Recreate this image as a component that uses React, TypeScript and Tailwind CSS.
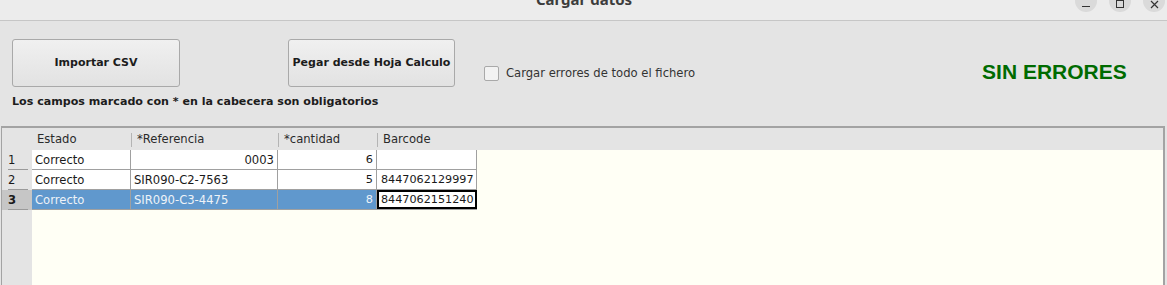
import React from "react";

const cols = [
  { name: "Estado", w: "w-[99px]" },
  { name: "*Referencia", w: "w-[147px]" },
  { name: "*cantidad", w: "w-[99px]" },
  { name: "Barcode", w: "w-[99px]" },
];

const rows = [
  { estado: "Correcto", ref: "0003", refRight: true, cant: "6", barcode: "" },
  { estado: "Correcto", ref: "SIR090-C2-7563", refRight: false, cant: "5", barcode: "8447062129997" },
  { estado: "Correcto", ref: "SIR090-C3-4475", refRight: false, cant: "8", barcode: "8447062151240", selected: true },
];

function WindowButton({ children }: { children: React.ReactNode }) {
  return (
    <div className="flex h-[22px] w-[22px] items-end justify-center rounded-full bg-[#dadada] pb-[4px] text-[11px] leading-none text-[#333]">
      {children}
    </div>
  );
}

export default function App() {
  return (
    <div className="flex h-[285px] w-[1167px] flex-col overflow-hidden bg-[#e4e4e4] font-['DejaVu_Sans',sans-serif] text-[#1a1a1a]">
      {/* title bar */}
      <div className="relative h-[21px] shrink-0 border-b border-[#c6c6c6] bg-[#ececec]">
        <div className="-mt-[11px] flex justify-center pl-[1px] font-['Noto_Sans',sans-serif] text-[15px] font-bold leading-[20px] text-[#3c3c3c]">
          Cargar datos
        </div>
        <div className="absolute right-[2px] top-[-10px] flex gap-[12px]">
          <WindowButton>
            <span className="mb-[1px] block h-[1px] w-[8px] bg-[#333]" />
          </WindowButton>
          <WindowButton>
            <span className="block h-[8px] w-[8px] border border-[#333]" />
          </WindowButton>
          <WindowButton>
            <svg width="9" height="9" viewBox="0 0 9 9" className="mb-[-1px]">
              <path d="M1 1L8 8M8 1L1 8" stroke="#333" strokeWidth="1.2" fill="none" />
            </svg>
          </WindowButton>
        </div>
      </div>

      {/* toolbar */}
      <div className="flex items-start pl-[12px] pt-[18px]">
        <button className="h-[48px] w-[168px] rounded-[3px] border border-[#a9a9a9] bg-gradient-to-b from-[#f0f0f0] to-[#e2e2e2] text-[11px] font-bold text-[#1c1c1c]">
          Importar CSV
        </button>
        <button className="ml-[108px] h-[48px] w-[167px] rounded-[3px] border border-[#a9a9a9] bg-gradient-to-b from-[#f0f0f0] to-[#e2e2e2] text-[11px] font-bold text-[#1c1c1c]">
          Pegar desde Hoja Calculo
        </button>
        <label className="ml-[29px] mt-[26px] flex items-center gap-[7px] text-[11.6px] text-[#333]">
          <span className="h-[15px] w-[15px] rounded-[2px] border border-[#a9a9a9] bg-[#f2f2f2]" />
          Cargar errores de todo el fichero
        </label>
        <div className="ml-[287px] mt-[20px] font-['Liberation_Sans',Arial,sans-serif] text-[21px] font-bold leading-[25px] text-[#006b00]">
          SIN ERRORES
        </div>
      </div>
      <div className="pl-[12px] pt-[8px] text-[11.1px] font-bold leading-[13px] text-[#1c1c1c]">
        Los campos marcado con * en la cabecera son obligatorios
      </div>

      {/* table */}
      <div className="ml-[1px] mr-[2px] mt-[18px] flex flex-1 flex-col border-l border-r-2 border-t-2 border-[#a3a3a3] text-[11.6px]">
        <div className="flex h-[22px] shrink-0 items-center pt-[2px] text-[#2a2a2a]">
          <div className="w-[30px]" />
          {cols.map((c, i) => (
            <div key={c.name} className={`${c.w} flex h-[14px] items-center ${i > 0 ? "border-l border-[#b4b4b4] pl-[5px]" : "pl-[5px]"}`}>
              {c.name}
            </div>
          ))}
        </div>
        <div className="flex flex-1">
          <div className="w-[30px] shrink-0">
            {rows.map((r, i) => (
              <div
                key={i}
                className={`flex h-[20px] items-center pl-[6px] pr-[4px] pt-[2px] ${r.selected ? "bg-[#c6c6c6] font-bold" : ""}`}
              >
                <span className="flex-1 border-b border-[#9a9a9a] leading-[17px]">{i + 1}</span>
              </div>
            ))}
          </div>
          <div className="flex-1 bg-[#fffff5]">
            {rows.map((r, i) => (
              <div
                key={i}
                className={`flex h-[20px] ${r.selected ? "bg-[#6098cd] text-[#eef3f8]" : "bg-white"} w-[445px] border-b border-[#a0a0a0]`}
              >
                <div className="flex w-[99px] items-center border-r border-[#a0a0a0] pl-[3px] pt-[2px]">{r.estado}</div>
                <div className={`flex w-[147px] items-center border-r border-[#a0a0a0] px-[3px] pt-[2px] ${r.refRight ? "justify-end" : ""}`}>
                  {r.ref}
                </div>
                <div className="flex w-[99px] items-center justify-end border-r border-[#a0a0a0] pr-[3px] pt-[2px] text-[11.3px]">{r.cant}</div>
                <div
                  className={`flex w-[100px] items-center text-[11.2px] ${r.selected ? "border-2 border-black bg-white pl-[2px] pt-[1px] text-[#1a1a1a]" : "border-r border-[#a0a0a0] pl-[4px] pt-[2px]"}`}
                >
                  {r.barcode}
                </div>
              </div>
            ))}
          </div>
        </div>
      </div>
    </div>
  );
}
